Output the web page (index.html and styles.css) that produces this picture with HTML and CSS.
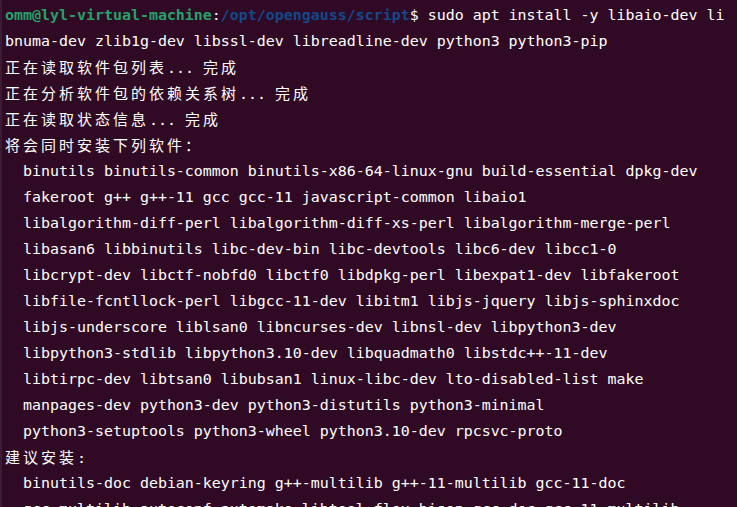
FILE: index.html
```html
<!DOCTYPE html>
<html lang="zh">
<head>
<meta charset="utf-8">
<link rel="stylesheet" href="styles.css">
</head>
<body>
<div class="term">
<div class="edge"></div>
<div class="screen">
<div class="ln"><span class="user">omm@lyl-virtual-machine</span>:<span class="path">/opt/opengauss/script</span>$ sudo apt install -y libaio-dev li</div>
<div class="ln">bnuma-dev zlib1g-dev libssl-dev libreadline-dev python3 python3-pip</div>
<div class="ln"><span class="cjk">正在读取软件包列表</span>... <span class="cjk">完成</span></div>
<div class="ln"><span class="cjk">正在分析软件包的依赖关系树</span>... <span class="cjk">完成</span></div>
<div class="ln"><span class="cjk">正在读取状态信息</span>... <span class="cjk">完成</span></div>
<div class="ln"><span class="cjk">将会同时安装下列软件：</span></div>
<div class="ln">  binutils binutils-common binutils-x86-64-linux-gnu build-essential dpkg-dev</div>
<div class="ln">  fakeroot g++ g++-11 gcc gcc-11 javascript-common libaio1</div>
<div class="ln">  libalgorithm-diff-perl libalgorithm-diff-xs-perl libalgorithm-merge-perl</div>
<div class="ln">  libasan6 libbinutils libc-dev-bin libc-devtools libc6-dev libcc1-0</div>
<div class="ln">  libcrypt-dev libctf-nobfd0 libctf0 libdpkg-perl libexpat1-dev libfakeroot</div>
<div class="ln">  libfile-fcntllock-perl libgcc-11-dev libitm1 libjs-jquery libjs-sphinxdoc</div>
<div class="ln">  libjs-underscore liblsan0 libncurses-dev libnsl-dev libpython3-dev</div>
<div class="ln">  libpython3-stdlib libpython3.10-dev libquadmath0 libstdc++-11-dev</div>
<div class="ln">  libtirpc-dev libtsan0 libubsan1 linux-libc-dev lto-disabled-list make</div>
<div class="ln">  manpages-dev python3-dev python3-distutils python3-minimal</div>
<div class="ln">  python3-setuptools python3-wheel python3.10-dev rpcsvc-proto</div>
<div class="ln"><span class="cjk">建议安装</span>:</div>
<div class="ln">  binutils-doc debian-keyring g++-multilib g++-11-multilib gcc-11-doc</div>
<div class="ln">  gcc-multilib autoconf automake libtool flex bison gcc-doc gcc-11-multilib</div>
</div>
</div>
</body>
</html>
```
FILE: styles.css
```css
html, body {
  margin: 0;
  padding: 0;
  background: #300a24;
}
.term {
  display: flex;
  width: 737px;
  height: 507px;
  overflow: hidden;
  background: #300a24;
}
.edge {
  width: 2px;
  flex: none;
  background: #3b1c33;
}
.screen {
  padding: 2px 0 0 3px;
  font-family: "DejaVu Sans Mono", "Noto Sans CJK SC", monospace;
  font-size: 14.95px;
  color: #ffffff;
}
.ln {
  height: 26px;
  line-height: 26px;
  white-space: pre;
}
.user {
  color: #26a269;
  font-weight: bold;
}
.path {
  color: #12488b;
  font-weight: bold;
}
.cjk {
  font-family: "Noto Sans CJK SC", sans-serif;
  font-size: 15px;
  letter-spacing: 3px;
}
```
